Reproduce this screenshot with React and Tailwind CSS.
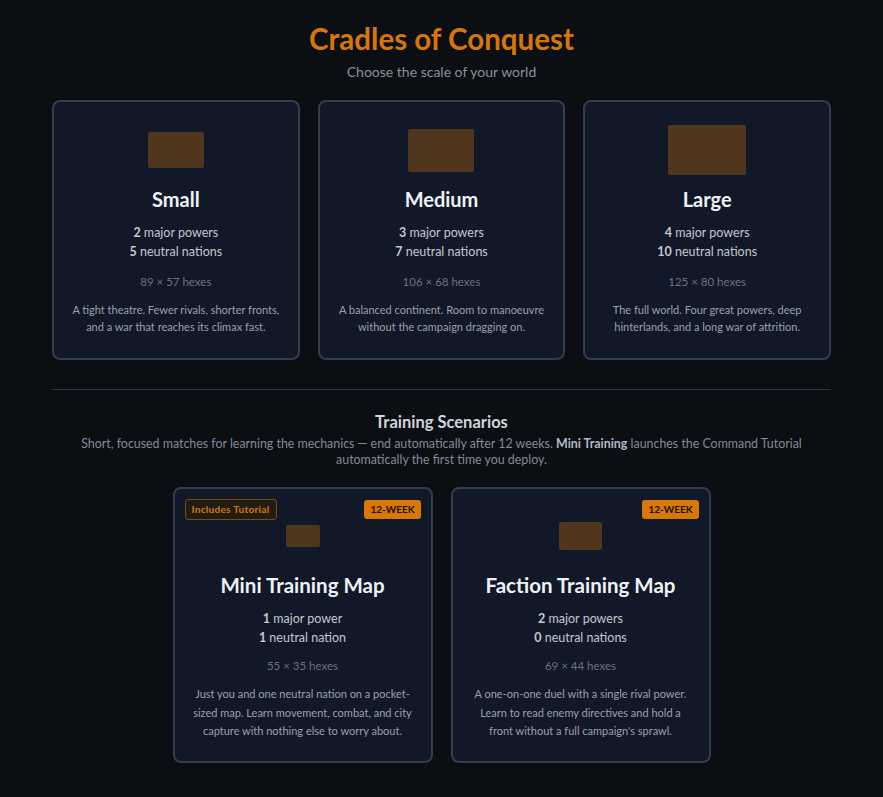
import React from 'react'

const SIZES = [
  {
    name: 'Small',
    majors: 2,
    neutrals: 5,
    hexes: '89 × 57 hexes',
    blurb: 'A tight theatre. Fewer rivals, shorter fronts, and a war that reaches its climax fast.',
    preview: 'w-[56px] h-[36px]',
  },
  {
    name: 'Medium',
    majors: 3,
    neutrals: 7,
    hexes: '106 × 68 hexes',
    blurb: 'A balanced continent. Room to manoeuvre without the campaign dragging on.',
    preview: 'w-[66px] h-[43px]',
  },
  {
    name: 'Large',
    majors: 4,
    neutrals: 10,
    hexes: '125 × 80 hexes',
    blurb: 'The full world. Four great powers, deep hinterlands, and a long war of attrition.',
    preview: 'w-[78px] h-[50px]',
  },
]

const TRAINING = [
  {
    name: 'Mini Training Map',
    majors: 1,
    neutrals: 1,
    hexes: '55 × 35 hexes',
    blurb: 'Just you and one neutral nation on a pocket-sized map. Learn movement, combat, and city capture with nothing else to worry about.',
    preview: 'w-[34px] h-[22px]',
    tutorial: true,
  },
  {
    name: 'Faction Training Map',
    majors: 2,
    neutrals: 0,
    hexes: '69 × 44 hexes',
    blurb: "A one-on-one duel with a single rival power. Learn to read enemy directives and hold a front without a full campaign's sprawl.",
    preview: 'w-[43px] h-[28px]',
    tutorial: false,
  },
]

function plural(n, word) {
  return n === 1 ? word : word + 's'
}

function Stats({ majors, neutrals }) {
  return (
    <div className="text-[12.5px] leading-[19px] text-[#c2c8d0]">
      <div><span className="font-bold">{majors}</span> major {plural(majors, 'power')}</div>
      <div><span className="font-bold">{neutrals}</span> neutral {plural(neutrals, 'nation')}</div>
    </div>
  )
}

function MapPreview({ cls }) {
  return <div className={`${cls} rounded-[2px] bg-[#4f361c]`} />
}

function SizeCard({ map }) {
  return (
    <div className="flex flex-col items-center rounded-lg border-2 border-[#363d4a] bg-[#111827] px-3 pt-[23px] pb-[23px] text-center">
      <div className="flex h-[50px] items-center justify-center">
        <MapPreview cls={map.preview} />
      </div>
      <div className="mt-[12px] text-[20px] font-bold leading-[24px] text-[#eef2f7]">{map.name}</div>
      <div className="mt-[12px]">
        <Stats majors={map.majors} neutrals={map.neutrals} />
      </div>
      <div className="mt-[12px] text-[11.5px] text-[#6b7380]">{map.hexes}</div>
      <div className="mt-[11px] text-[11px] leading-[17px] text-[#9aa1ab]">{map.blurb}</div>
    </div>
  )
}

function TrainingCard({ map }) {
  return (
    <div className="flex w-[260px] flex-col items-center rounded-lg border-2 border-[#363d4a] bg-[#111827] px-[10px] pt-[10px] pb-[20px] text-center">
      <div className="flex h-[20px] w-full items-center justify-between">
        {map.tutorial ? (
          <span className="rounded-[3px] border border-[#7a4a12] bg-[#231c14] px-[6px] py-[2px] text-[10px] font-bold tracking-[0.03em] text-[#d97706]">
            Includes Tutorial
          </span>
        ) : (
          <span />
        )}
        <span className="rounded-[3px] bg-[#d97706] px-[6px] py-[2px] text-[10px] font-bold text-[#1a1206]">
          12-WEEK
        </span>
      </div>
      <div className="flex h-[34px] items-center justify-center">
        <MapPreview cls={map.preview} />
      </div>
      <div className="mt-[19px] text-[20.5px] font-bold leading-[26px] text-[#eef2f7]">{map.name}</div>
      <div className="mt-[11px]">
        <Stats majors={map.majors} neutrals={map.neutrals} />
      </div>
      <div className="mt-[10px] text-[11.5px] text-[#6b7380]">{map.hexes}</div>
      <div className="mt-[11px] px-2 text-[11px] leading-[18.5px] text-[#9aa1ab]">{map.blurb}</div>
    </div>
  )
}

export default function App() {
  return (
    <div className="min-h-screen bg-[#0b0e13] px-[52px] pt-[20px] pb-10 font-['Lato','Noto_Sans',sans-serif]">
      <h1 className="text-center text-[29.5px] font-bold leading-[38px] text-[#d97706]">Cradles of Conquest</h1>
      <p className="mt-[3px] text-center text-[14px] text-[#8a919b]">Choose the scale of your world</p>

      <div className="mx-auto mt-[18px] grid max-w-[780px] grid-cols-3 gap-[18px]">
        {SIZES.map((m) => (
          <SizeCard key={m.name} map={m} />
        ))}
      </div>

      <div className="mx-auto mt-[29px] max-w-[780px] border-t border-[#30363f]" />

      <div className="mx-auto mt-[20px] max-w-[780px] text-center">
        <h2 className="text-[16.5px] font-bold text-[#d1d5db]">Training Scenarios</h2>
        <p className="mx-auto mt-[1px] max-w-[730px] text-[12.4px] leading-[16px] text-[#838b96]">
          Short, focused matches for learning the mechanics — end automatically after 12 weeks.{' '}
          <span className="font-bold text-[#b4bac3]">Mini Training</span> launches the Command Tutorial
          automatically the first time you deploy.
        </p>
      </div>

      <div className="mt-[19px] flex justify-center gap-[18px]">
        {TRAINING.map((m) => (
          <TrainingCard key={m.name} map={m} />
        ))}
      </div>
    </div>
  )
}
